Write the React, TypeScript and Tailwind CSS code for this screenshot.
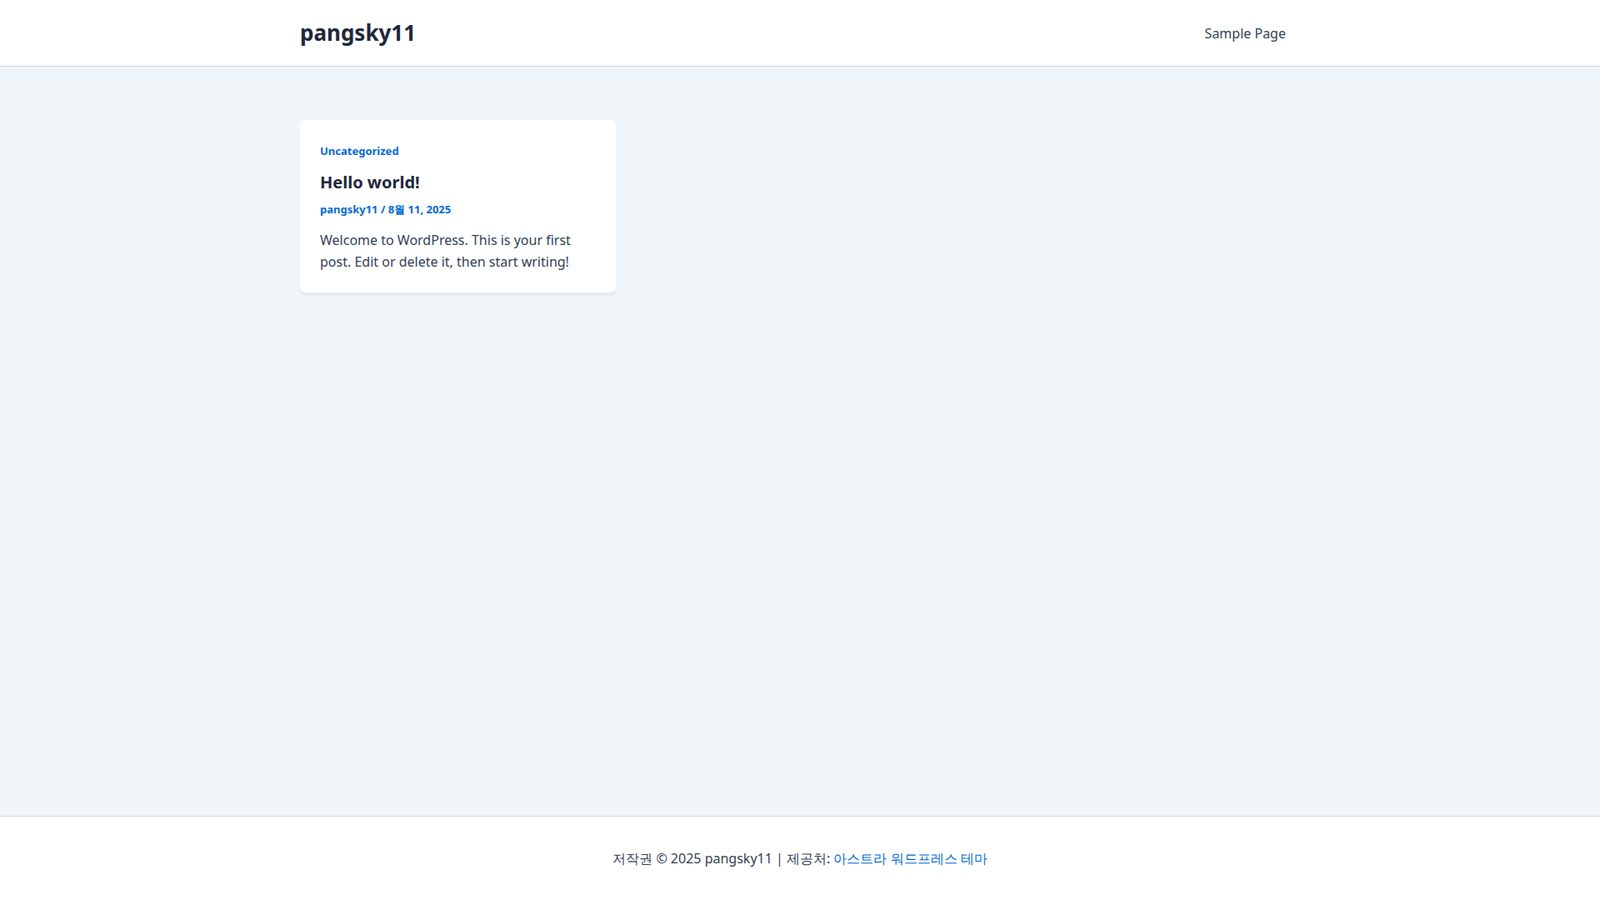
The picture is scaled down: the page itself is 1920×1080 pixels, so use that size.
export default function App() {
  return (
    <div className="min-h-screen flex flex-col bg-[#f0f5fa] font-['Liberation_Sans','Noto_Sans_CJK_KR',sans-serif]">
      <header className="bg-white border-b border-[#d1d5db] h-[80px]">
        <div className="w-[1200px] mx-auto h-full flex items-center justify-between">
          <span className="text-[26px] font-bold text-[#1e293b]">pangsky11</span>
          <span className="text-[16px] text-[#334155] pr-[17px]">Sample Page</span>
        </div>
      </header>
      <main className="flex-1">
        <div className="w-[1200px] mx-auto pt-[64px] grid grid-cols-3 gap-8">
          <article className="bg-white rounded-[6px] shadow-[0_4px_0_rgba(0,0,0,0.04)] px-6 pt-[27px] pb-[24px]">
            <div className="text-[13px] font-bold text-[#046bd2] leading-[20px]">Uncategorized</div>
            <h2 className="mt-[14px] text-[20px] font-bold text-[#1e293b] leading-[28px]">Hello world!</h2>
            <div className="mt-[8px] text-[13px] font-bold text-[#046bd2] leading-[20px]">pangsky11 / 8월 11, 2025</div>
            <p className="mt-[14px] text-[16px] text-[#334155] leading-[26px]">
              Welcome to WordPress. This is your first post. Edit or delete it, then start writing!
            </p>
          </article>
        </div>
      </main>
      <footer className="bg-white border-t border-[#d1d5db] h-[101px] flex items-center justify-center text-[16px] text-[#334155]">
        저작권 © 2025 pangsky11 | 제공처:&nbsp;<span className="text-[#046bd2]">아스트라 워드프레스 테마</span>
      </footer>
    </div>
  );
}
